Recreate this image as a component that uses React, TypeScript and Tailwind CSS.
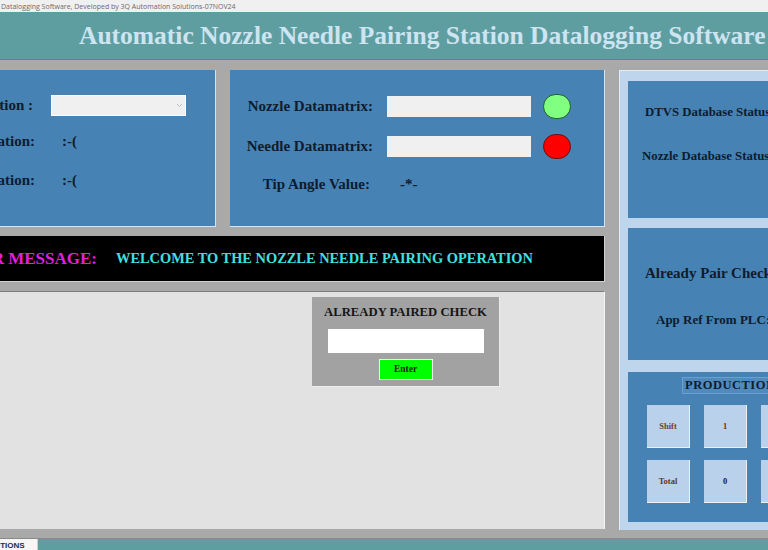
import React from "react";

const serif = { fontFamily: '"Liberation Serif", "Times New Roman", serif' };

function Cell({ text, tone }: { text: string; tone: string }) {
  return (
    <div className="flex h-[43px] w-[43px] items-center justify-center border-r border-b border-[#e8f0f8] bg-[#b9d1ea]">
      <span className={`text-[8.5px] font-bold ${tone}`}>{text}</span>
    </div>
  );
}

export default function App() {
  return (
    <div className="h-[550px] w-[768px] overflow-hidden bg-[#a9a9a9]" style={serif}>
      {/* window caption */}
      <div className="flex h-[12px] items-center bg-[#f0f0f0] pl-[1px]">
        <span
          className="whitespace-nowrap text-[7px] leading-none text-[#6b6b6b]"
          style={{ fontFamily: '"Open Sans", "Liberation Sans", sans-serif' }}
        >
          Datalogging Software, Developed by 3Q Automation Solutions-07NOV24
        </span>
      </div>

      {/* header */}
      <div className="flex h-[48px] items-center border-b border-[#4f8a8c] bg-[#5f9ea0] pl-[79px]">
        <h1 className="whitespace-nowrap text-[25.5px] font-bold leading-none text-[#cde4f1]">
          Automatic Nozzle Needle Pairing Station Datalogging Software
        </h1>
      </div>

      <div className="flex h-[478px] pt-[10px]">
        {/* left column, scrolled off to the left */}
        <div className="ml-[-150px] flex w-[755px] shrink-0 flex-col gap-[9px]">
          <div className="flex gap-[14px]">
            <div className="flex h-[157px] w-[366px] flex-col border-r border-b border-[#d4e4f2] bg-[#4682b4] pt-[25px] text-[15px] font-bold text-[#0f1c2e]">
              <div className="flex h-[21px] items-center">
                <span className="w-[183px] whitespace-nowrap text-right">Select Operation :</span>
                <div className="ml-[18px] flex h-[21px] w-[135px] items-center justify-end border border-white bg-[#f0f0f0] pr-[2px]">
                  <svg width="7" height="5" viewBox="0 0 7 5">
                    <path d="M1 1l2.5 2.5L6 1" stroke="#b0b0b0" fill="none" strokeWidth="0.8" />
                  </svg>
                </div>
              </div>
              <div className="mt-[15px] flex h-[21px] items-center">
                <span className="w-[185px] whitespace-nowrap text-right">Current Operation:</span>
                <span className="ml-[27px]">:-(</span>
              </div>
              <div className="mt-[18px] flex h-[21px] items-center">
                <span className="w-[185px] whitespace-nowrap text-right">Previous Operation:</span>
                <span className="ml-[27px]">:-(</span>
              </div>
            </div>

            <div className="flex h-[157px] w-[375px] flex-col border-r border-b border-[#d4e4f2] bg-[#4682b4] pt-[24px] text-[15px] font-bold text-[#0f1c2e]">
              <div className="flex h-[25px] items-center">
                <span className="w-[143px] whitespace-nowrap text-right">Nozzle Datamatrix:</span>
                <div className="ml-[14px] h-[21px] w-[144px] bg-[#f0f0f0]" />
                <div className="ml-[12px] h-[25px] w-[28px] rounded-full border border-[#1f5a2a] bg-[#80ff80]" />
              </div>
              <div className="mt-[15px] flex h-[25px] items-center">
                <span className="w-[143px] whitespace-nowrap text-right">Needle Datamatrix:</span>
                <div className="ml-[14px] h-[21px] w-[144px] bg-[#f0f0f0]" />
                <div className="ml-[12px] h-[25px] w-[28px] rounded-full border border-[#6a1010] bg-[#ff0000]" />
              </div>
              <div className="mt-[15px] flex h-[21px] items-center">
                <span className="w-[140px] whitespace-nowrap text-right">Tip Angle Value:</span>
                <span className="ml-[30px]">-*-</span>
              </div>
            </div>
          </div>

          {/* operator message */}
          <div className="flex h-[46px] items-center border-r border-b border-[#d0d0d0] bg-black font-bold">
            <span className="w-[247px] whitespace-nowrap text-right text-[17px] text-[#e020e0]">
              OPERATOR MESSAGE:
            </span>
            <span className="ml-[19px] whitespace-nowrap text-[14.4px] text-[#3ee0e0]">
              WELCOME TO THE NOZZLE NEEDLE PAIRING OPERATION
            </span>
          </div>

          {/* lower work area */}
          <div className="h-[238px] border-t border-[#7c7c7c] border-r border-r-[#f4f4f4] bg-[#e2e2e2] pt-[5px]">
            <div className="ml-[462px] flex h-[90px] w-[188px] flex-col items-center border-r border-b border-[#ececec] bg-[#a2a2a2] pt-[6px]">
              <span className="whitespace-nowrap text-[12.7px] font-bold text-[#161616]">ALREADY PAIRED CHECK</span>
              <div className="mt-[7px] h-[24px] w-[156px] bg-white" />
              <button className="mt-[6px] flex h-[21px] w-[54px] items-center justify-center border border-[#e8ffe8] bg-[#00ff00] text-[9.5px] font-bold text-[#1a1a1a]">
                Enter
              </button>
            </div>
          </div>
        </div>

        {/* right column */}
        <div className="ml-[14px] flex h-[460px] w-[170px] shrink-0 flex-col border-l border-t border-[#e0ecf6] bg-[#bed5ec] pl-[8px] pt-[10px]">
          <div className="flex h-[137px] flex-col bg-[#4682b4] pl-[17px] pt-[22px] text-[12.8px] font-bold text-[#0f1c2e]">
            <span className="whitespace-nowrap">DTVS Database Status</span>
            <span className="-ml-[3px] mt-[25px] whitespace-nowrap">Nozzle Database Status</span>
          </div>
          <div className="mt-[10px] flex h-[132px] flex-col bg-[#4682b4] pl-[17px] pt-[34px] font-bold text-[#0f1c2e]">
            <span className="whitespace-nowrap text-[15px]">Already Pair Check</span>
            <span className="ml-[11px] mt-[25px] whitespace-nowrap text-[13px]">App Ref From PLC:</span>
          </div>
          <div className="mt-[12px] flex h-[150px] flex-col bg-[#4682b4] pl-[19px] pt-[5px]">
            <div className="ml-[35px] flex h-[17px] items-center border border-[#6f9fcc] bg-[#4f8bbf] pl-[2px]">
              <span className="whitespace-nowrap text-[12.5px] font-bold tracking-[0.5px] text-[#0f1c2e]">
                PRODUCTION
              </span>
            </div>
            <div className="mt-[11px] grid grid-cols-[43px_43px_43px] gap-x-[14px] gap-y-[12px]">
              <Cell text="Shift" tone="text-[#7a3b2a]" />
              <Cell text="1" tone="text-[#8b1a1a]" />
              <Cell text="" tone="" />
              <Cell text="Total" tone="text-[#5a3a2a]" />
              <Cell text="0" tone="text-[#1a1a1a]" />
              <Cell text="" tone="" />
            </div>
          </div>
        </div>
      </div>

      {/* bottom strip */}
      <div className="flex h-[12px] border-t border-[#8a8a8a] bg-[#5f9ea0]">
        <div className="flex w-[38px] items-end overflow-hidden border-r border-[#cfcfcf] bg-[#f6f6f6]">
          <span
            className="ml-[-22px] whitespace-nowrap text-[8px] font-bold leading-[9px] text-[#1c2d4a]"
            style={{ fontFamily: '"Liberation Sans", Arial, sans-serif' }}
          >
            SOLUTIONS
          </span>
        </div>
      </div>
    </div>
  );
}
